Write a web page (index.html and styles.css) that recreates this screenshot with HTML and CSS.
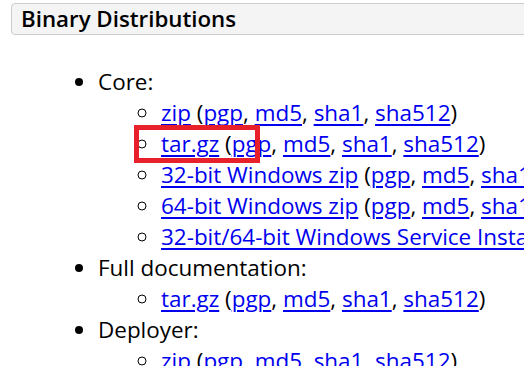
FILE: index.html
```html
<!DOCTYPE html>
<html lang="en">
<head>
    <meta charset="UTF-8">
    <title>Binary Distributions</title>
    <link rel="stylesheet" href="styles.css">
</head>
<body>

    <div class="section">
        <h2 class="sectiontitle">Binary Distributions</h2>

        <ul class="downloads">
            <li>Core:
                <ul>
                    <li><a href="#">zip</a> (<a href="#">pgp</a>, <a href="#">md5</a>, <a href="#">sha1</a>, <a href="#">sha512</a>)</li>
                    <li><span class="highlight"></span><a href="#">tar.gz</a> (<a href="#">pgp</a>, <a href="#">md5</a>, <a href="#">sha1</a>, <a href="#">sha512</a>)</li>
                    <li><a href="#">32-bit Windows zip</a> (<a href="#">pgp</a>, <a href="#">md5</a>, <a href="#">sha1</a>, <a href="#">sha512</a>)</li>
                    <li><a href="#">64-bit Windows zip</a> (<a href="#">pgp</a>, <a href="#">md5</a>, <a href="#">sha1</a>, <a href="#">sha512</a>)</li>
                    <li><a href="#">32-bit/64-bit Windows Service Installer</a> (<a href="#">pgp</a>, <a href="#">md5</a>, <a href="#">sha1</a>, <a href="#">sha512</a>)</li>
                </ul>
            </li>
            <li>Full documentation:
                <ul>
                    <li><a href="#">tar.gz</a> (<a href="#">pgp</a>, <a href="#">md5</a>, <a href="#">sha1</a>, <a href="#">sha512</a>)</li>
                </ul>
            </li>
            <li>Deployer:
                <ul>
                    <li><a href="#">zip</a> (<a href="#">pgp</a>, <a href="#">md5</a>, <a href="#">sha1</a>, <a href="#">sha512</a>)</li>
                    <li><a href="#">tar.gz</a> (<a href="#">pgp</a>, <a href="#">md5</a>, <a href="#">sha1</a>, <a href="#">sha512</a>)</li>
                </ul>
            </li>
        </ul>
    </div>

</body>
</html>
```

FILE: styles.css
```css
* {
    font-family: 'Open Sans', sans-serif;
    box-sizing: border-box;
    margin: 0;
}

body {
    background-color: #fff;
    color: #000;
    overflow: hidden;
    padding: 3px 0 0 11px;
}

.section {
    width: 600px;
}

.sectiontitle {
    font-size: 22.3px;
    font-weight: 600;
    line-height: 30px;
    padding: 0 9px;
    background-color: #f4f4f4;
    border: 1px solid #cccccc;
    border-radius: 4px;
}

.downloads {
    font-size: 22.45px;
    line-height: 31px;
    padding-left: 87px;
    margin-top: 31px;
    white-space: nowrap;
}

.downloads ul {
    list-style-type: circle;
    padding-left: 63px;
}

a {
    color: #0000ee;
    text-decoration-thickness: 2px;
    text-underline-offset: 3px;
}

.downloads li {
    position: relative;
}

.highlight {
    position: absolute;
    left: -27px;
    top: -3px;
    width: 126px;
    height: 38px;
    border: 5px solid #e8202a;
}
```
